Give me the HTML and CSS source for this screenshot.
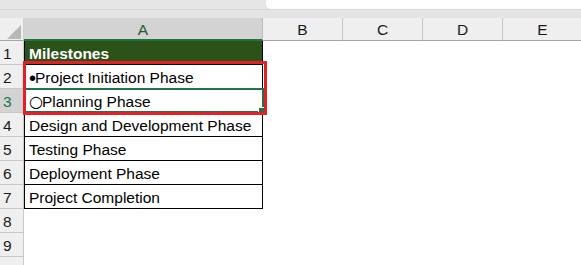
FILE: index.html
```html
<!DOCTYPE html>
<html>
<head>
<meta charset="utf-8">
<link rel="stylesheet" href="styles.css">
</head>
<body>
<div class="top">
  <div class="top-strip"><div class="namebox"></div></div>
  <div class="top-band"></div>
</div>
<div class="sheet">
  <div class="corner"><svg width="24" height="24" viewBox="0 0 24 24"><polygon points="21,7 21,21 7,21" fill="#b8b8b8"/></svg></div>
  <div class="colhead sel">A</div>
  <div class="colhead">B</div>
  <div class="colhead">C</div>
  <div class="colhead">D</div>
  <div class="colhead">E</div>

  <div class="rowhead">1</div><div class="cell t head">Milestones</div><div class="blank"></div><div class="blank"></div><div class="blank"></div><div class="blank"></div>
  <div class="rowhead">2</div><div class="cell t"><span class="dot">•</span>Project Initiation Phase</div><div class="blank"></div><div class="blank"></div><div class="blank"></div><div class="blank"></div>
  <div class="rowhead selrow">3</div><div class="cell t"><span class="ring">○</span>Planning Phase</div><div class="blank"></div><div class="blank"></div><div class="blank"></div><div class="blank"></div>
  <div class="rowhead">4</div><div class="cell t">Design and Development Phase</div><div class="blank"></div><div class="blank"></div><div class="blank"></div><div class="blank"></div>
  <div class="rowhead">5</div><div class="cell t">Testing Phase</div><div class="blank"></div><div class="blank"></div><div class="blank"></div><div class="blank"></div>
  <div class="rowhead">6</div><div class="cell t">Deployment Phase</div><div class="blank"></div><div class="blank"></div><div class="blank"></div><div class="blank"></div>
  <div class="rowhead">7</div><div class="cell t">Project Completion</div><div class="blank"></div><div class="blank"></div><div class="blank"></div><div class="blank"></div>
  <div class="rowhead">8</div><div class="cell"></div><div class="blank"></div><div class="blank"></div><div class="blank"></div><div class="blank"></div>
  <div class="rowhead">9</div><div class="cell"></div><div class="blank"></div><div class="blank"></div><div class="blank"></div><div class="blank"></div>
  <div class="rowhead">10</div><div class="cell"></div><div class="blank"></div><div class="blank"></div><div class="blank"></div><div class="blank"></div>

  <div class="selection"><span class="handle"></span></div>
  <div class="callout"></div>
</div>
</body>
</html>
```

FILE: styles.css
```css
html, body {
  margin: 0;
  padding: 0;
  background: #ffffff;
  overflow: hidden;
}
body {
  width: 581px;
  height: 265px;
  font-family: "Liberation Sans", Arial, sans-serif;
}
.top {
  height: 18px;
  display: flex;
  flex-direction: column;
}
.top-strip {
  height: 9px;
  background: #e6e6e6;
  display: flex;
  justify-content: flex-end;
}
.namebox {
  width: 315px;
  height: 9px;
  background: #ffffff;
  border-bottom-left-radius: 5px;
}
.top-band {
  height: 9px;
  background: #e6e3e6;
  border-top: 1px solid #d6d6d6;
  box-sizing: border-box;
}
.sheet {
  position: relative;
  display: grid;
  grid-template-columns: 24px 239px 80px 80px 80px 80px;
  grid-template-rows: 23px;
  grid-auto-rows: 24px;
}
.corner {
  background: #efefef;
  border-bottom: 1px solid #a6a6a6;
  border-right: 1px solid #d0d0d0;
  box-sizing: border-box;
  line-height: 0;
}
.corner svg { display: block; }
.colhead {
  background: #efefef;
  border-right: 1px solid #c4c4c4;
  border-bottom: 1px solid #a6a6a6;
  box-sizing: border-box;
  display: flex;
  align-items: center;
  justify-content: center;
  font-size: 15.5px;
  color: #1a1a1a;
  padding-top: 2px;
}
.colhead.sel {
  background: #d3d3d3;
  color: #1d5c37;
  border-bottom: 2px solid #217346;
  border-right: 1px solid #bcbcbc;
}
.rowhead {
  background: #efefef;
  border-right: 1px solid #c8c8c8;
  border-bottom: 1px solid #c8c8c8;
  box-sizing: border-box;
  font-size: 15.5px;
  color: #1a1a1a;
  display: flex;
  align-items: center;
  padding-left: 3px;
  padding-top: 3px;
}
.rowhead.selrow {
  background: #d3d3d3;
  color: #217346;
}
.cell {
  box-sizing: border-box;
  font-size: 15.5px;
  line-height: 18px;
  color: #000000;
  display: flex;
  align-items: flex-end;
  padding: 0 0 1px 4px;
  white-space: nowrap;
  overflow: hidden;
}
.cell.t {
  border-left: 1px solid #000;
  border-right: 1px solid #000;
  border-bottom: 1px solid #000;
}
.cell.head {
  background: #2a5219;
  color: #ffffff;
  font-weight: bold;
}
.dot {
  font-size: 20px;
  line-height: 18px;
  margin-right: -1px;
}
.ring {
  font-family: "DejaVu Sans", sans-serif;
  font-size: 16px;
  line-height: 18px;
  margin-right: -1px;
}
.blank { background: #ffffff; }
.selection {
  position: absolute;
  left: 24px;
  top: 70px;
  width: 240px;
  height: 25px;
  border: 2px solid #217346;
  box-sizing: border-box;
}
.handle {
  position: absolute;
  right: -3px;
  bottom: -3px;
  width: 5px;
  height: 5px;
  background: #217346;
  border: 1px solid #ffffff;
}
.callout {
  position: absolute;
  left: 23px;
  top: 43px;
  width: 244px;
  height: 54px;
  border: 3px solid #e41f26;
  box-sizing: border-box;
}
```
